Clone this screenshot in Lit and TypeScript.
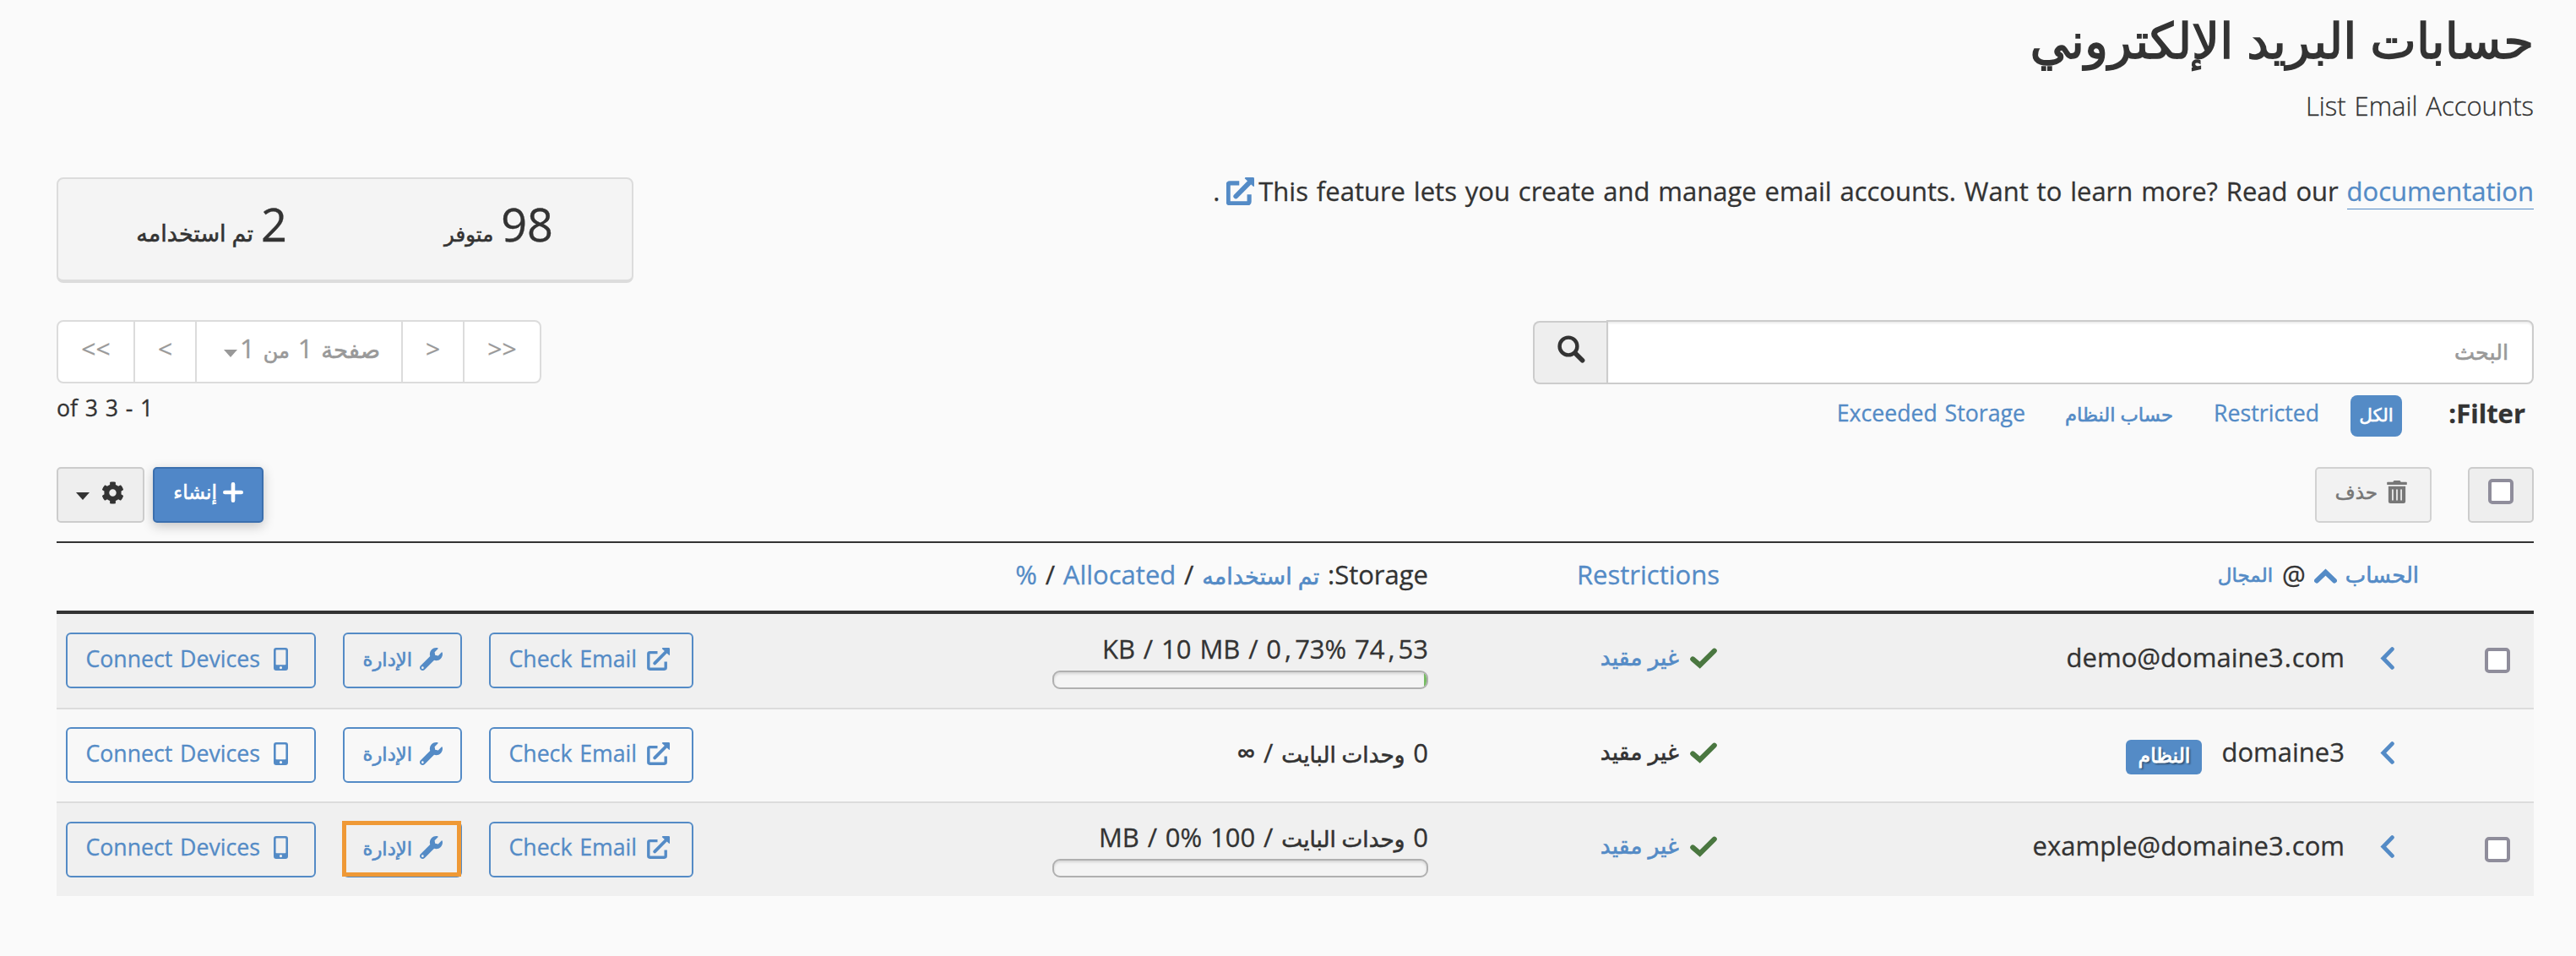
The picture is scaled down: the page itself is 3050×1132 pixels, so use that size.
import { LitElement, html, svg, css, nothing } from "lit";
import type { TemplateResult } from "lit";

interface Account {
  name: TemplateResult;
  system: boolean;
  storage: TemplateResult;
  usedPercent: number | null;
  highlighted: boolean;
}

const extIcon = (size: number, stroke: number) => html`<svg class="icon" width=${size} height=${size} viewBox="0 0 27 27" fill="none" stroke="currentColor">
    <path
      d="M12.5 5.6H3.4q-1.6 0-1.6 1.6V23.6q0 1.6 1.6 1.6H20.6q1.6 0 1.6-1.6V16.5"
      stroke-width=${stroke}
      stroke-linecap="butt"
    />
    <path d="M9.2 18.4L23.4 4" stroke-width=${stroke + 0.5} stroke-linecap="round" />
    <path d="M17.8 1.2q0-1.2 1.2-1.2h6.8q1.2 0 1.2 1.2v7q0 1.3-1.2.4l-7.6-7.2z" fill="currentColor" stroke="none" />
  </svg>`;

const wrenchIcon = html`
  <svg class="icon" width="27" height="27" viewBox="0 0 512 512" fill="currentColor">
    <path
      d="M507.73 109.1c-2.24-9.03-13.54-12.09-20.12-5.51l-74.36 74.36-67.88-11.31-11.31-67.88 74.36-74.36c6.62-6.62 3.43-17.9-5.66-20.16-47.38-11.74-99.55.91-136.58 37.93-39.64 39.64-50.55 97.1-34.05 147.2L18.74 402.76c-24.99 24.99-24.99 65.51 0 90.5 24.99 24.99 65.51 24.99 90.5 0l213.21-213.21c50.12 16.71 107.47 5.68 147.37-34.22 37.07-37.07 49.7-89.32 37.91-136.73zM64 472c-13.25 0-24-10.75-24-24 0-13.26 10.75-24 24-24s24 10.74 24 24c0 13.25-10.75 24-24 24z"
    />
  </svg>
`;

const mobileIcon = html`
  <svg class="icon" width="17" height="27" viewBox="0 0 17 27">
    <path
      fill="currentColor"
      fill-rule="evenodd"
      d="M3 0h11a3 3 0 0 1 3 3v21a3 3 0 0 1-3 3H3a3 3 0 0 1-3-3V3a3 3 0 0 1 3-3zM3.4 2.6a.8.8 0 0 0-.8.8V19.4a.8.8 0 0 0 .8.8h10.2a.8.8 0 0 0 .8-.8V3.4a.8.8 0 0 0-.8-.8zM8.5 22a1.6 1.6 0 1 0 0 3.2a1.6 1.6 0 1 0 0-3.2z"
    />
  </svg>
`;

const gearIcon = html`
  <svg class="icon" width="27" height="27" viewBox="0 0 512 512" fill="currentColor">
    <path
      d="M487.4 315.7l-42.6-24.6c4.3-23.2 4.3-47 0-70.2l42.6-24.6c4.9-2.8 7.1-8.6 5.5-14-11.1-35.6-30-67.8-54.7-94.6-3.8-4.1-10-5.1-14.8-2.3L380.8 110c-17.9-15.4-38.5-27.3-60.8-35.1V25.8c0-5.6-3.9-10.5-9.4-11.7-36.7-8.2-74.3-7.8-109.2 0-5.5 1.2-9.4 6.1-9.4 11.7V75c-22.2 7.9-42.8 19.8-60.8 35.1L88.7 85.5c-4.9-2.8-11-1.9-14.8 2.3-24.7 26.7-43.6 58.9-54.7 94.6-1.7 5.4.6 11.2 5.5 14L67.3 221c-4.3 23.2-4.3 47 0 70.2l-42.6 24.6c-4.9 2.8-7.1 8.6-5.5 14 11.1 35.6 30 67.8 54.7 94.6 3.8 4.1 10 5.1 14.8 2.3l42.6-24.6c17.9 15.4 38.5 27.3 60.8 35.1v49.2c0 5.6 3.9 10.5 9.4 11.7 36.7 8.2 74.3 7.8 109.2 0 5.5-1.2 9.4-6.1 9.4-11.7v-49.2c22.2-7.9 42.8-19.8 60.8-35.1l42.6 24.6c4.9 2.8 11 1.9 14.8-2.3 24.7-26.7 43.6-58.9 54.7-94.6 1.5-5.5-.7-11.3-5.6-14.1zM256 336c-44.1 0-80-35.9-80-80s35.9-80 80-80 80 35.9 80 80-35.9 80-80 80z"
    />
  </svg>
`;

const trashIcon = html`
  <svg class="icon" width="24" height="27" viewBox="0 0 448 512" fill="currentColor">
    <path
      d="M32 464a48 48 0 0 0 48 48h288a48 48 0 0 0 48-48V128H32zm272-256a16 16 0 0 1 32 0v224a16 16 0 0 1-32 0zm-96 0a16 16 0 0 1 32 0v224a16 16 0 0 1-32 0zm-96 0a16 16 0 0 1 32 0v224a16 16 0 0 1-32 0zM432 32H312l-9.4-18.7A24 24 0 0 0 281.1 0H166.8a23.72 23.72 0 0 0-21.4 13.3L136 32H16A16 16 0 0 0 0 48v32a16 16 0 0 0 16 16h416a16 16 0 0 0 16-16V48a16 16 0 0 0-16-16z"
    />
  </svg>
`;

const strokeIcon = (w: number, h: number, shape: TemplateResult<2>, stroke: number) => html`
  <svg
    class="icon"
    width=${w}
    height=${h}
    viewBox="0 0 ${w} ${h}"
    fill="none"
    stroke="currentColor"
    stroke-width=${stroke}
    stroke-linecap="round"
    stroke-linejoin="miter"
  >
    ${shape}
  </svg>
`;

const plusIcon = strokeIcon(24, 24, svg`<path d="M12 2.3V21.7M2.3 12H21.7" />`, 4.6);
const checkIcon = strokeIcon(32, 25, svg`<path d="M3.2 13.4L11.6 20.6L28.8 3.6" />`, 6);
const chevronIcon = strokeIcon(17, 27, svg`<path d="M14.4 2.6L3.8 13.5L14.4 24.4" />`, 4.8);
const sortIcon = strokeIcon(27, 18, svg`<path d="M3 14.6L13.5 4.6L24 14.6" />`, 5.8);
const searchIcon = strokeIcon(
  33,
  33,
  svg`<circle cx="13" cy="13" r="10.4" stroke-width="4.4" /><path d="M21.6 21.8L29.6 29.8" />`,
  5.6
);

const comma = html`<span class="comma">,</span>`;
const dot = html`<span class="dot">.</span>`;

const accounts: Account[] = [
  {
    name: html`demo@domaine3${dot}com`,
    system: false,
    storage: html`74${comma}53 KB / 10 MB / 0${comma}73%`,
    usedPercent: 0.73,
    highlighted: false,
  },
  {
    name: html`domaine3`,
    system: true,
    storage: html`0 <span class="ar bytes">وحدات البايت</span> / <span class="infinity">∞</span>`,
    usedPercent: null,
    highlighted: false,
  },
  {
    name: html`example@domaine3${dot}com`,
    system: false,
    storage: html`0 <span class="ar bytes">وحدات البايت</span> / 100 MB / 0%`,
    usedPercent: 0,
    highlighted: true,
  },
];

class AppRoot extends LitElement {
  static styles = css`
    :host {
      display: block;
      --blue: #548bc6;
      --ink: #333;
    }
    * {
      box-sizing: border-box;
    }
    .page {
      direction: rtl;
      width: 3050px;
      height: 1132px;
      padding: 0 50px 0 67px;
      background: #fafafa;
      color: var(--ink);
      font: 400 31px/50px "Open Sans", "DejaVu Sans", sans-serif;
      word-spacing: 1.8px;
      -webkit-text-stroke: 0.3px currentColor;
      white-space: nowrap;
      overflow: hidden;
    }
    .icon {
      display: block;
      flex: none;
    }
    .ar {
      line-height: 0;
      word-spacing: 0;
      -webkit-text-stroke: 0.6px currentColor;
    }
    .link {
      color: var(--blue);
    }
    .top {
      display: flex;
      justify-content: space-between;
      height: 379px;
    }
    h1 {
      margin: 0;
      padding-top: 7px;
      font-size: 58px;
      line-height: 80px;
      font-weight: 400;
      word-spacing: 1px;
      -webkit-text-stroke: 1.5px currentColor;
    }
    .subtitle {
      margin: 13px 0 0;
      font-weight: 300;
      font-size: 31px;
    }
    .intro {
      margin: 51px 0 0;
    }
    .intro .icon {
      display: inline-block;
      vertical-align: -5px;
      margin: 0 5px 0 8px;
    }
    .intro .doc {
      border-bottom: 1px solid var(--blue);
    }
    .stats {
      display: flex;
      width: 683px;
      height: 125px;
      margin-top: 210px;
      padding: 15px 93px 0 0;
      background: #f4f4f4;
      border: 2px solid #dcdcdc;
      border-bottom-width: 4px;
      border-radius: 8px;
    }
    .stat {
      width: 315px;
      flex: none;
      font-size: 54px;
      line-height: 76px;
    }
    .stat .ar {
      margin-right: 9px;
    }
    .available {
      font-size: 24.4px;
    }
    .used {
      font-size: 27px;
    }
    .controls {
      display: flex;
      justify-content: space-between;
      height: 174px;
    }
    .search {
      display: flex;
      width: 1185px;
    }
    .field {
      flex: 1;
      height: 76px;
      padding: 0 28px;
      background: #fff;
      border: 2px solid #ccc;
      border-radius: 0 8px 8px 0;
      box-shadow: inset 0 2px 2px rgba(0, 0, 0, 0.075);
      color: #999;
      line-height: 67px;
    }
    .field .ar {
      font-size: 25.5px;
    }
    .go {
      display: flex;
      justify-content: center;
      width: 87px;
      height: 75px;
      margin-top: 1px;
      padding: 15px 0 0 2px;
      background: #eee;
      border: 2px solid #ccc;
      border-right: 0;
      border-radius: 8px 0 0 8px;
    }
    .filters {
      display: flex;
      margin-top: 13px;
      padding-right: 10px;
      font-size: 26.7px;
      line-height: 42px;
      color: var(--blue);
    }
    .filters .label {
      width: 146px;
      font-size: 31px;
      font-weight: 700;
      color: var(--ink);
    }
    .filters .all {
      width: 61px;
      height: 49px;
      margin-left: 37px;
      background: var(--blue);
      border-radius: 8px;
      color: #fff;
      text-align: center;
    }
    .all .ar {
      font-size: 21.5px;
    }
    .filters .f1 {
      width: 173px;
    }
    .filters .f2 {
      width: 175px;
    }
    .f2 .ar {
      font-size: 22.7px;
    }
    .pager {
      display: flex;
      direction: ltr;
      width: 574px;
      height: 75px;
      background: #fff;
      border: 2px solid #dcdcdc;
      border-radius: 8px;
      color: #999;
      line-height: 63px;
      text-align: center;
    }
    .pager > div + div {
      border-left: 2px solid #dcdcdc;
    }
    .pager .edge {
      flex: none;
      width: 89px;
      font-size: 30px;
    }
    .pager .edge:last-child {
      width: 91px;
    }
    .pager .step {
      flex: none;
      width: 73px;
      font-size: 30px;
    }
    .pager .current {
      display: flex;
      direction: rtl;
      flex: 1;
      padding-right: 25px;
    }
    .page-word {
      font-size: 27.5px;
    }
    .of-word {
      font-size: 24px;
    }
    .caret {
      width: 0;
      height: 0;
      border: 8px solid transparent;
      border-top: 9px solid currentColor;
      border-bottom: 0;
    }
    .current .caret {
      margin: 33px 3px 0 0;
    }
    .range {
      width: 574px;
      margin-top: 8px;
      font-size: 26.7px;
      line-height: 42px;
      text-align: left;
    }
    .toolbar {
      display: flex;
      height: 88px;
      font-size: 28px;
    }
    .btn {
      display: flex;
      flex: none;
      height: 66px;
      background: #eee;
      border: 2px solid #ccc;
      border-radius: 5px;
      line-height: 52px;
    }
    .btn .ar {
      line-height: inherit;
    }
    .box {
      width: 30px;
      height: 30px;
      background: #fff;
      border: 4px solid #8f8d9b;
      border-radius: 5px;
    }
    .select-all {
      width: 78px;
      padding: 12px 22px 0 0;
    }
    .delete {
      width: 138px;
      margin-right: 43px;
      padding-right: 27px;
      color: #777;
      background: #f2f2f2;
      border-color: #d2d2d2;
    }
    .delete .icon {
      margin: 14px 0 0 11px;
    }
    .delete .ar {
      font-size: 23px;
      line-height: 55px;
    }
    .create {
      width: 131px;
      margin-right: auto;
      padding-right: 22px;
      background: #5087c8;
      border-color: #3b6fae;
      color: #fff;
      box-shadow: 0 4px 14px rgba(0, 0, 0, 0.22);
    }
    .create .icon {
      margin: 16px 0 0 7px;
    }
    .create .ar {
      font-size: 23.3px;
      line-height: 55px;
    }
    .settings {
      width: 104px;
      margin-right: 10px;
      padding-right: 22px;
    }
    .settings .icon {
      margin: 15px 0 0 14px;
    }
    .settings .caret {
      margin-top: 28px;
    }
    .row {
      display: grid;
      grid-template-columns: 100px 123px 741px 345px 870px 754px;
      height: 111px;
      border-bottom: 2px solid #dcdcdc;
      background: #f0f0f0;
    }
    .row:nth-child(odd) {
      background: #f8f8f8;
    }
    .row.r0 {
      height: 113px;
      padding-top: 1px;
    }
    .row.r2 {
      height: 110px;
      border-bottom: 0;
    }
    .row.head {
      height: 86px;
      background: transparent;
      border-top: 2px solid var(--ink);
      border-bottom: 4px solid var(--ink);
    }
    .head .cell {
      padding-top: 12px;
    }
    .head .account {
      grid-column: 1 / 4;
      display: flex;
      padding-right: 136px;
    }
    .head .icon {
      margin: 18px 10px 0 10px;
    }
    .head .account .ar {
      line-height: inherit;
    }
    .w-account {
      font-size: 25.9px;
    }
    .w-domain {
      font-size: 23px;
      margin-right: 11px;
    }
    .bytes {
      font-size: 26.3px;
    }
    .comma {
      padding: 0 4px;
    }
    .dot {
      padding: 0 1px;
    }
    .infinity {
      font-weight: 600;
    }
    .pick {
      padding: 39px 28px 0 0;
    }
    .r2 .pick {
      padding-top: 40px;
    }
    .expand {
      padding: 38px 65px 0 0;
      color: var(--blue);
    }
    .name {
      display: flex;
      padding: 25px 1px 0 0;
    }
    .badge {
      width: 90px;
      height: 41px;
      margin: 11px 23px 0 0;
      background: var(--blue);
      border-radius: 6px;
      color: #fff;
      text-align: center;
      line-height: 36px;
      font-size: 23.5px;
      text-shadow: 2px 2px 2px rgba(0, 0, 0, 0.45);
      -webkit-text-stroke: 0.9px #fff;
    }
    .limit {
      display: flex;
      padding: 25px 3px 0 0;
    }
    .limit .icon {
      margin: 14px 0 0 13px;
      color: #4a7740;
    }
    .limit .ar {
      font-size: 26.6px;
      line-height: inherit;
    }
    .storage {
      padding-top: 26px;
    }
    .storage.metered {
      padding-top: 15px;
    }
    .meter {
      width: 445px;
      height: 22px;
      margin-top: 1px;
      overflow: hidden;
      background: #f4f4f4;
      border: 2px solid #b0b0b0;
      border-radius: 9px;
      box-shadow: inset 0 2px 3px rgba(0, 0, 0, 0.12);
    }
    .fill {
      height: 100%;
      background: #77bb63;
    }
    .actions {
      display: flex;
      direction: ltr;
      gap: 32px;
      padding: 21px 0 0 11px;
    }
    .r2 .actions {
      padding-top: 22px;
    }
    .action {
      display: flex;
      direction: rtl;
      flex: none;
      height: 66px;
      border: 2px solid var(--blue);
      border-radius: 6px;
      color: var(--blue);
      font-size: 26.7px;
      line-height: 57px;
      position: relative;
    }
    .r2 .action {
      line-height: 55px;
    }
    .action .icon {
      margin-top: 16px;
    }
    .r2 .action .icon {
      margin-top: 15px;
    }
    .connect {
      width: 296px;
      padding-right: 31px;
    }
    .connect .icon {
      margin-left: 16px;
    }
    .manage {
      width: 141px;
      padding-right: 21px;
    }
    .manage .icon {
      margin-left: 9px;
    }
    .manage .ar {
      font-size: 22.7px;
      line-height: 59px;
    }
    .check {
      width: 242px;
      padding-right: 26px;
    }
    .check .icon {
      margin-left: 12px;
    }
    .marker {
      position: absolute;
      inset: -3px -1px -1px -3px;
      border: 5px solid #ef9936;
    }
  `;

  private row(a: Account, i: number) {
    return html`
      <div class="row r${i}">
        <div class="pick">${a.system ? nothing : html`<div class="box"></div>`}</div>
        <div class="expand">${chevronIcon}</div>
        <div class="name">
          <span>${a.name}</span>
          ${a.system ? html`<span class="badge">النظام</span>` : nothing}
        </div>
        <div class="limit">
          ${checkIcon}<span class="ar ${a.system ? "" : "link"}">غير مقيد</span>
        </div>
        <div class="storage ${a.usedPercent === null ? "" : "metered"}">
          <div>${a.storage}</div>
          ${a.usedPercent === null
            ? nothing
            : html`<div class="meter"><div class="fill" style="width:${a.usedPercent}%"></div></div>`}
        </div>
        <div class="actions">
          <div class="action connect">${mobileIcon}<span>Connect Devices</span></div>
          <div class="action manage">
            ${wrenchIcon}<span class="ar">الإدارة</span>
            ${a.highlighted ? html`<div class="marker"></div>` : nothing}
          </div>
          <div class="action check">${extIcon(27, 3.4)}<span>Check Email</span></div>
        </div>
      </div>
    `;
  }

  render() {
    return html`
      <div class="page">
        <div class="top">
          <div>
            <h1>حسابات البريد الإلكتروني</h1>
            <p class="subtitle">List Email Accounts</p>
            <p class="intro">This feature lets you create and manage email accounts. Want to learn more? Read our <span class="link"><span class="doc">documentation</span>${extIcon(33, 4.2)}</span>.</p>
          </div>
          <div class="stats">
            <div class="stat">98<span class="ar available">متوفر</span></div>
            <div class="stat">2<span class="ar used">تم استخدامه</span></div>
          </div>
        </div>

        <div class="controls">
          <div>
            <div class="search">
              <div class="field"><span class="ar">البحث</span></div>
              <div class="go">${searchIcon}</div>
            </div>
            <div class="filters">
              <div class="label">Filter:</div>
              <div class="all"><span class="ar">الكل</span></div>
              <div class="f1">Restricted</div>
              <div class="f2"><span class="ar">حساب النظام</span></div>
              <div>Exceeded Storage</div>
            </div>
          </div>
          <div>
            <div class="pager">
              <div class="edge">&lt;&lt;</div>
              <div class="step">&lt;</div>
              <div class="current">
                <span><span class="ar page-word">صفحة</span> 1 <span class="ar of-word">من</span> 1</span>
                <div class="caret"></div>
              </div>
              <div class="step">&gt;</div>
              <div class="edge">&gt;&gt;</div>
            </div>
            <div class="range">1 - 3 of 3</div>
          </div>
        </div>

        <div class="toolbar">
          <div class="btn select-all"><div class="box"></div></div>
          <div class="btn delete">${trashIcon}<span class="ar">حذف</span></div>
          <div class="btn create">${plusIcon}<span class="ar">إنشاء</span></div>
          <div class="btn settings">${gearIcon}<div class="caret"></div></div>
        </div>

        <div class="table">
          <div class="row head">
            <div class="cell account">
              <span class="ar link w-account">الحساب</span>
              <span class="link">${sortIcon}</span>
              <span>@</span>
              <span class="ar link w-domain">المجال</span>
            </div>
            <div class="cell link">Restrictions</div>
            <div class="cell">
              Storage: <span class="ar link used">تم استخدامه</span> / <span class="link">Allocated</span> / <span class="link">%</span>
            </div>
          </div>
          ${accounts.map((a, i) => this.row(a, i))}
        </div>
      </div>
    `;
  }
}

customElements.define("app-root", AppRoot);
